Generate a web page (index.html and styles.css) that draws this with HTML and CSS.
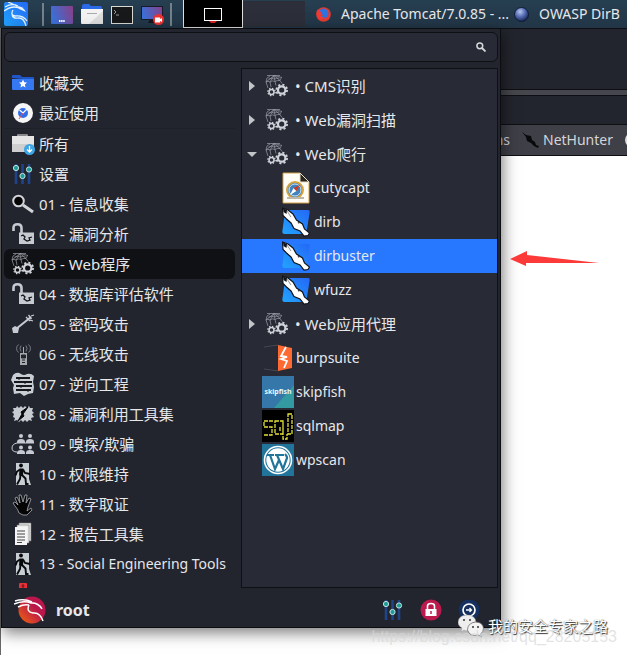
FILE: index.html
```html
<!DOCTYPE html>
<html lang="zh-CN">
<head>
    <meta charset="UTF-8">
    <meta name="viewport" content="width=device-width, initial-scale=1.0">
    <title>Kali</title>
    <link rel="stylesheet" href="styles.css">
</head>
<body>

    <!-- shared icons -->
    <svg class="sprite" aria-hidden="true">
        <defs>
            <linearGradient id="blue" x1="1" y1="0" x2="0" y2="1">
                <stop offset="0" stop-color="#2468f5"/><stop offset="1" stop-color="#22a4ff"/>
            </linearGradient>
            <linearGradient id="wall" x1="0" y1="0.3" x2="1" y2="0">
                <stop offset="0" stop-color="#3d6fd6"/><stop offset="1" stop-color="#8a3f86"/>
            </linearGradient>
            <linearGradient id="fire" x1="1" y1="0" x2="0" y2="1">
                <stop offset="0.4" stop-color="#b9174c"/><stop offset="1" stop-color="#f4680b"/>
            </linearGradient>
            <radialGradient id="orb" cx="0.4" cy="0.3" r="0.7">
                <stop offset="0" stop-color="#b9c6ee"/><stop offset="0.5" stop-color="#566fb8"/><stop offset="1" stop-color="#16254f"/>
            </radialGradient>
        </defs>
        <symbol id="i-web" viewBox="0 0 24 24">
            <g fill="none" stroke="#9a9ea6" stroke-width="0.7">
                <path d="M2 1.500h13M9 1.500L1 8M9 1.500L5 8M9 1.500l1 6M9 1.500l6 5M9 1.500l8 2M1 8q0-5 4-6M1 8q2-1.500 4 0 2-2 5-.5 2-1.500 5-1 0-2 2-3M3.500 5q3-1 6 0 2-1 5-1M1 8l2 6M5 8l1 5M10 7.500l1 4M15 6.500l2 3"/>
            </g>
            <g fill="none" stroke="#d0d4da">
                <circle cx="6.500" cy="18" r="2.500" stroke-width="1.500"/>
                <circle cx="6.500" cy="18" r="3.700" stroke-width="1.200" stroke-dasharray="1.450 1.456"/>
                <circle cx="16.700" cy="16" r="3.700" stroke-width="2.200"/>
                <circle cx="16.700" cy="16" r="5.400" stroke-width="1.800" stroke-dasharray="2.100 2.140"/>
            </g>
        </symbol>
        <symbol id="i-lock" viewBox="0 0 24 24">
            <path d="M2.500 9V6q0-3.800 4-3.800T10.500 6v5" fill="none" stroke="#c6cbd2" stroke-width="2.600"/>
            <path d="M8 10.500h15V22H8z" fill="#c6cbd2"/>
            <path d="M10 14l2-1 2 2-1 2 3 2 3-1-1-2 3-1" fill="none" stroke="#15161a" stroke-width="1.300"/>
        </symbol>
        <symbol id="i-run" viewBox="0 0 24 24">
            <path d="M5 1h13v16l2 6H5z" fill="#c6cdd3"/>
            <circle cx="10" cy="3.500" r="1.900" fill="#08090b"/>
            <path d="M8.500 6.500h4l-.5 7h-4z" fill="#08090b"/>
            <path d="M9 7.500l-3 2-1.500 4M12 7.500l2 3.500 5 1M9.500 13l-.5 4-3 5.500M10.500 12.500l4 4 .5 5.500h2.500" fill="none" stroke="#08090b" stroke-width="1.900"/>
        </symbol>
        <symbol id="i-sliders" viewBox="0 0 24 24">
            <path d="M5 2v20M11.500 2v20M18 2v20" stroke="#1f4489" stroke-width="2.600"/>
            <g fill="#1c9c9a" stroke="#c5e3e1"><circle cx="5" cy="6" r="2.600"/><circle cx="11.500" cy="14" r="2.600"/><circle cx="18" cy="7.500" r="2.600"/></g>
        </symbol>
        <symbol id="i-dragon" viewBox="0 0 28 32">
            <path d="M6 4h20q2 0 1.700 2l-3 19q-.5 3-3.500 3H2.500Q0 28 .4 25L3 6q.4-2 3-2z" fill="url(#blue)"/>
            <path d="M.5 2l5.500 2 5 4 3.500 6 6 4 2 5 5 4-1.500 2.500-4 .5-4-5-6-2.500-3-5.500-4.500-4L1 9.500z" fill="#fff" stroke="#101318" stroke-width="1.200"/>
            <path d="M1 2.500L5 4l-.5 4-3-2zM15.500 16l2 .5-.5 1.500z" fill="#101318"/>
            <path d="M5 5l4 6" stroke="#777" stroke-width=".8"/>
        </symbol>
    </svg>

    <header class="panel">
        <button class="panel-btn" aria-label="Kali">
            <svg width="24" height="24" viewBox="0 0 24 24"><rect width="24" height="24" rx="2" fill="url(#blue)"/><path d="M1 5q7-4 13-1M0 9q8-6 15-3M4 0l9 4M9 8q-3 5 2 6 8-1 12 5M8 13q1 4 7 3 5 0 7 8" fill="none" stroke="#e8f4ff" stroke-width="1.300"/><path d="M13 4q6 0 9 6l-7-3z" fill="#e8f4ff"/></svg>
        </button>
        <span class="divider"></span>
        <button class="panel-btn launcher" aria-label="Desktop">
            <svg width="22" height="22" viewBox="0 0 22 22"><rect y="3" width="22" height="18" rx="1" fill="url(#wall)"/><path d="M8 18h6" stroke="#fff" stroke-width="2" stroke-dasharray="1.500 .6"/></svg>
        </button>
        <button class="panel-btn launcher" aria-label="Files">
            <svg width="22" height="22" viewBox="0 0 22 22"><path d="M1 8V3q0-2 2-2h5l2 2h9q2 0 2 2v3z" fill="#2a6ae6"/><path d="M0 6h22v14q0 1-1 1H1q-1 0-1-1z" fill="#f2f2f2"/><path d="M22 8v12q0 1-1 1H8z" fill="#dcdcdc"/><path d="M6 10.500h10" stroke="#aaa"/></svg>
        </button>
        <button class="panel-btn launcher" aria-label="Terminal">
            <svg width="22" height="22" viewBox="0 0 22 22"><rect x=".5" y="3.500" width="21" height="17" fill="#17191a" stroke="#d8d8d4"/><path d="M3 7l2 2-2 2M5 12h3" fill="none" stroke="#999"/></svg>
        </button>
        <button class="panel-btn launcher" aria-label="Recorder">
            <svg width="24" height="22" viewBox="0 0 24 22"><path d="M7 20l2-4h5v4z" fill="#15171d"/><rect x=".5" y="3.500" width="21" height="13" fill="url(#wall)" stroke="#171a27"/><circle cx="17.500" cy="16.500" r="5.500" fill="#ea3434"/><path d="M14 14.500h5V16l2-1v4l-2-1v1.500h-5z" fill="#fff"/></svg>
        </button>
        <span class="divider"></span>
        <button class="workspace" aria-label="Workspace 1">
            <svg width="18" height="20" viewBox="0 0 18 20"><path d="M5 17h8l-2 2H7z" fill="#d22"/><rect x=".5" y="4.500" width="17" height="12" fill="#000" stroke="#fff"/></svg>
        </button>
        <nav class="tasks">
            <button class="task">
                <svg width="15" height="15" viewBox="0 0 15 15"><circle cx="7.500" cy="7.500" r="7.300" fill="#e23b2e"/><path d="M4 3q3-3 7 0 3 4 0 7-4 3-6 0l2-2-3-2z" fill="#2e73e0"/><path d="M1 3l3 1 2 3-2 1q2 3 5 2-3 4-7 1-2-3-1-8z" fill="#ef3b35"/></svg>
                Apache Tomcat/7.0.85 - ...
            </button>
            <button class="task">
                <svg width="15" height="15" viewBox="0 0 15 15"><circle cx="7.500" cy="7.500" r="7" fill="url(#orb)" stroke="#101a38"/></svg>
                OWASP DirB
            </button>
        </nav>
    </header>

    <main class="desktop">
        <section class="browser">
            <div class="titlebar"></div>
            <div class="tabstrip"></div>
            <div class="urlbar"></div>
            <div class="bookmarks">
                <a href="#">ms</a>
                <a href="#">
                    <svg width="17" height="16" viewBox="0 0 17 16"><path d="M0 0l4 3 5 1 1 4 3 2 1 3 3 1-1 2-4-2-3-3-4-2-1-4z" fill="#08090a"/></svg>
                    NetHunter
                </a>
                <a href="#" aria-label="Bookmark"><svg width="14" height="14" viewBox="0 0 14 14"><circle cx="7" cy="7" r="6" fill="none" stroke="#ddd" stroke-width="2"/></svg></a>
            </div>
            <div class="page"></div>
        </section>

        <section class="menu">
            <div class="search">
                <input type="search" aria-label="搜索">
                <svg width="10" height="10" viewBox="0 0 10 10"><circle cx="3.800" cy="3.800" r="2.900" fill="none" stroke="#d6d7da" stroke-width="1.500"/><path d="M6 6l3.500 3.500" stroke="#d6d7da" stroke-width="1.800"/></svg>
            </div>

            <div class="lists">
                <nav class="categories">
                    <button class="category">
                        <svg viewBox="0 0 24 24"><path d="M1 7V5q0-1 1-1h7l2 2h11q1 0 1 1v2z" fill="#1f57c8"/><path d="M1 8h22v11H2q-1 0-1-1z" fill="#3677f2"/><path d="M12 8.500l1.200 2.700 2.800.3-2.100 2 .6 2.900-2.500-1.500-2.500 1.500.6-2.900-2.100-2 2.800-.3z" fill="#fff"/></svg>
                        收藏夹
                    </button>
                    <button class="category">
                        <svg viewBox="0 0 24 24"><circle cx="12" cy="12" r="10" fill="#f6f6f6"/><circle cx="12" cy="12" r="5" fill="#2f6ee8"/><path d="M8.500 9l3.500 3 4-4" fill="none" stroke="#fff" stroke-width="1.200"/><path d="M12 12l-4 6" stroke="#e05060"/></svg>
                        最近使用
                    </button>
                    <hr>
                    <button class="category">
                        <svg viewBox="0 0 24 24"><path d="M7 5V3h9v2" fill="none" stroke="#aaa" stroke-width="1.500"/><path d="M1 4h22v15H1z" fill="#e5e5e5"/><path d="M1 12h22v8H1z" fill="#cfcfcf"/><circle cx="18.500" cy="17.500" r="5.500" fill="#3ea5e6"/><path d="M18.500 14v5M16 17.500l2.500 2.500 2.500-2.500" fill="none" stroke="#fff" stroke-width="1.300"/></svg>
                        所有
                    </button>
                    <button class="category"><svg><use href="#i-sliders"/></svg>设置</button>
                    <button class="category">
                        <svg viewBox="0 0 24 24"><circle cx="7.500" cy="9" r="5.300" fill="#050505" stroke="#d0d3d8" stroke-width="2"/><path d="M12 13l10 7" stroke="#d0d3d8" stroke-width="3"/></svg>
                        01 - 信息收集
                    </button>
                    <button class="category"><svg><use href="#i-lock"/></svg>02 - 漏洞分析</button>
                    <button class="category active"><svg><use href="#i-web"/></svg>03 - Web程序</button>
                    <button class="category"><svg><use href="#i-lock"/></svg>04 - 数据库评估软件</button>
                    <button class="category">
                        <svg viewBox="0 0 24 24"><path d="M5 17L20 5" stroke="#c6cbd2" stroke-width="2"/><path d="M15 5l4 4M17.500 3l3 4M19 8l3 1M20 4l3-1" stroke="#c6cbd2" stroke-width="1.300"/><path d="M1 16l3-2 4 2-1 5-5 0z" fill="#c6cbd2"/></svg>
                        05 - 密码攻击
                    </button>
                    <button class="category">
                        <svg viewBox="0 0 24 24"><path d="M9 11h7v12H9zM12 5h1v6H12z" fill="#a5a8ad"/><path d="M10.500 13h4v3h-4zM11 18h3M11 20.500h3" fill="#23252e" stroke="#23252e"/><path d="M10 3.500q-2 3 0 6M7.500 2.500q-4 4 0 8M15 3.500q2 3 0 6M17.500 2.500q4 4 0 8" fill="none" stroke="#8b8e93" stroke-width=".8"/></svg>
                        06 - 无线攻击
                    </button>
                    <button class="category">
                        <svg viewBox="0 0 24 24"><path d="M2 3q4-4 8-1 3 2 6 0 4-1 7 2l-1 6 1 5-1 6-5 1-4 2-4-3-6 1-1-6 1-3-3-5z" fill="#c9ced5"/><path d="M5 6h14M3 10h18M5 14h16M5 18h15" stroke="#17191e" stroke-width="1.800"/><path d="M8 5v3M14 9v3M10 13v3M17 17v3" stroke="#17191e"/></svg>
                        07 - 逆向工程
                    </button>
                    <button class="category">
                        <svg viewBox="0 0 24 24"><path d="M2 6l3 0 1-2 2 2 2-2 2 2 2-2 2 2 2-2 1 2h3l-1 3 2 2-2 1 2 3-3 1 1 3-3-1-2 2-2-2-2 2-2-2-2 2-2-2-3 1 1-3-2-1 1-3-2-2 2-1z" fill="#c6cbd2"/><path d="M17 5l-7 5 1 2-4 7 6-5-1-2z" fill="#050608" stroke="#050608"/></svg>
                        08 - 漏洞利用工具集
                    </button>
                    <button class="category">
                        <svg viewBox="0 0 24 24"><g fill="#c6cbd2"><circle cx="10" cy="4" r="2"/><circle cx="19" cy="4" r="2"/><path d="M6 10q0-3 4-3t4 3v1H6zM15 10q0-3 4-3t4 3v1h-8zM6 21q0-3 4-3t4 3v1H6zM15 21q0-3 4-3t4 3v1h-8z"/><circle cx="10" cy="15.500" r="2"/><circle cx="19" cy="15.500" r="2"/></g><path d="M23 11H6q-5 1-5 5 0 4 5 4" fill="none" stroke="#c6cbd2"/></svg>
                        09 - 嗅探/欺骗
                    </button>
                    <button class="category"><svg><use href="#i-run"/></svg>10 - 权限维持</button>
                    <button class="category">
                        <svg viewBox="0 0 24 24"><path d="M8 21q-1-4-4-7l-2-3 2-1 3 3-3-7 2-1 3 6-1-8h2l2 7 2-7h2l-1 8 3-5 2 1-3 8-1 4 4-3 1 2-5 5-4 0z" fill="#050506" stroke="#a9acb1" stroke-width=".8"/></svg>
                        11 - 数字取证
                    </button>
                    <button class="category">
                        <svg viewBox="0 0 24 24"><path d="M8 1h12v18H8z" fill="#e9e9e9" stroke="#777" stroke-width=".6"/><path d="M6 3h12v18H6z" fill="#eee" stroke="#777" stroke-width=".6"/><path d="M4 5h12v18H4z" fill="#f5f5f5"/><path d="M6 9h8M6 12h8M6 15h8M6 18h8M6 20.500h5" stroke="#444"/></svg>
                        12 - 报告工具集
                    </button>
                    <button class="category latin"><svg><use href="#i-run"/></svg>13 - Social Engineering Tools</button>
                    <button class="category" aria-label="14">
                        <svg viewBox="0 0 24 24"><rect x="8" y="1" width="8" height="20" rx="1" fill="#e8303a"/><path d="M12 2v4M10.500 4h3" stroke="#701018"/></svg>
                    </button>
                </nav>

                <ul class="tree">
                    <li><button class="group"><i class="arrow"></i><svg><use href="#i-web"/></svg>• CMS识别</button></li>
                    <li><button class="group"><i class="arrow"></i><svg><use href="#i-web"/></svg>• Web漏洞扫描</button></li>
                    <li>
                        <button class="group open"><i class="arrow"></i><svg><use href="#i-web"/></svg>• Web爬行</button>
                        <ul>
                            <li><button class="app latin">
                                <svg viewBox="0 0 28 32"><path d="M1 1h17l9 9v21H1z" fill="#fffdf6" stroke="#d5a14c"/><path d="M18 1v9h9z" fill="#2b2620" stroke="#e9dfc4"/><circle cx="13" cy="18" r="8" fill="#3f82bd" stroke="#d7a33d" stroke-width="2"/><circle cx="13" cy="18" r="6" fill="none" stroke="#d3e6f3"/><path d="M8 23l3.500-7 3 3z" fill="#fff"/><path d="M18 13l-6.500 3 3 3z" fill="#d23a20"/><path d="M5 26h17" stroke="#bdb7a8" stroke-width="2"/></svg>
                                cutycapt
                            </button></li>
                            <li><button class="app latin"><svg><use href="#i-dragon"/></svg>dirb</button></li>
                            <li><button class="app latin selected"><svg><use href="#i-dragon"/></svg>dirbuster</button></li>
                            <li><button class="app latin"><svg><use href="#i-dragon"/></svg>wfuzz</button></li>
                        </ul>
                    </li>
                    <li><button class="group"><i class="arrow"></i><svg><use href="#i-web"/></svg>• Web应用代理</button></li>
                    <li><button class="tool latin">
                        <svg viewBox="0 0 32 32"><path d="M2 5l14-2M2 27l14 2" stroke="#444752"/><path d="M16 3l14 3v20l-14 3z" fill="#ff6a33"/><path d="M24 5l-5 9 6 1-6 2 6 2-3 7" fill="none" stroke="#fff" stroke-width="1.800"/></svg>
                        burpsuite
                    </button></li>
                    <li><button class="tool latin">
                        <svg viewBox="0 0 32 32"><path d="M0 0h32v32H0z" fill="#3477a8"/><path d="M32 9v23H12z" fill="#329aa0"/><text x="16" y="18" class="skip">skipfish</text></svg>
                        skipfish
                    </button></li>
                    <li><button class="tool latin">
                        <svg viewBox="0 0 32 32"><path d="M0 0h32v32H0z" fill="#000"/><path d="M11 11H2v6h8v8H2M13 11h8v13h-8zM18 17v4M21 11v18h4v-5M26 4h4v20h-4z" fill="none" stroke="#e3e13a" stroke-width="1.300" stroke-dasharray="4 1"/></svg>
                        sqlmap
                    </button></li>
                    <li><button class="tool latin">
                        <svg viewBox="0 0 32 32"><path d="M0 0h32v32H0z" fill="#21759b"/><circle cx="16" cy="16" r="13.500" fill="none" stroke="#fff" stroke-width="1.600"/><circle cx="16" cy="16" r="11.700" fill="#fff"/><path d="M5 11h7M13 11h9M8 11l5 14 4-9M15 11l6 14 4-11q0-2-2-4" fill="none" stroke="#21759b" stroke-width="2.200"/></svg>
                        wpscan
                    </button></li>
                </ul>
            </div>

            <footer class="user">
                <svg width="32" height="30" viewBox="0 0 32 30"><circle cx="18" cy="15" r="13.500" fill="url(#fire)"/><path d="M0 9q10-4 17-1M1 6q9-3 17 1M4 12q6-3 11-2M15 10q-3 7 4 8 7-1 10 8M16 8q8-1 12 6" fill="none" stroke="#fff" stroke-width="1.500"/></svg>
                <span class="name">root</span>
                <button aria-label="设置"><svg width="24" height="24"><use href="#i-sliders"/></svg></button>
                <button aria-label="锁定"><svg width="24" height="24" viewBox="0 0 24 24"><circle cx="12" cy="12" r="10.500" fill="#bb1a4d"/><path d="M8.500 11V8q0-2.500 3.500-2.500T15.500 8v3" fill="none" stroke="#fff" stroke-width="1.600"/><path d="M6.500 11h11v7h-11z" fill="#fff"/><path d="M12 13v3" stroke="#bb1a4d" stroke-width="1.500"/></svg></button>
                <button aria-label="注销"><svg width="24" height="24" viewBox="0 0 24 24"><circle cx="12" cy="12" r="10.500" fill="#15305f"/><circle cx="12" cy="12" r="6" fill="none" stroke="#fff" stroke-width="1.700"/><path d="M9 12h5M12.500 10l2 2-2 2" fill="none" stroke="#fff" stroke-width="1.300"/></svg></button>
            </footer>
        </section>

        <svg class="pointer" width="90" height="18" viewBox="0 0 90 18"><path d="M0 9L17 1v4l72 8-73 0v3z" fill="#fb3a39"/></svg>

        <div class="watermark">
            <div class="brand">
                <svg width="26" height="24" viewBox="0 0 26 24"><path d="M9 1q8 0 9 7-8 1-8 9-3 0-4-1l-3 2 1-4Q0 12 0 8q1-7 9-7z" fill="#eee" stroke="#999" stroke-width=".5"/><path d="M17.500 8q7 0 8 6 0 4-3 6l1 3-3-2q-9 2-11-5 0-7 8-8z" fill="#f3f3f3" stroke="#666" stroke-width=".7"/><g fill="#333"><circle cx="6" cy="6" r="1"/><circle cx="12" cy="6" r="1"/><circle cx="15" cy="13" r="1"/><circle cx="20" cy="13" r="1"/></g></svg>
                我的安全专家之路
            </div>
            <p class="link">https://blog.csdn.net/qq_28205153</p>
        </div>
    </main>

</body>
</html>
```

FILE: styles.css
```css
* {
    box-sizing: border-box;
}

body {
    margin: 0;
    height: 100vh;
    display: flex;
    flex-direction: column;
    overflow: hidden;
    font-family: "Noto Sans", "Noto Sans CJK SC", sans-serif;
    font-size: 15px;
    line-height: 20px;
    color: #e6e7ea;
    background-color: #fff;
}

button {
    padding: 0;
    border: none;
    background: none;
    font: inherit;
    color: inherit;
    text-align: left;
    white-space: nowrap;
}

svg {
    flex: none;
    display: block;
}

.sprite {
    position: absolute;
    width: 0;
    height: 0;
}

/* top panel */
.panel {
    display: flex;
    align-items: center;
    height: 28px;
    padding-left: 4px;
    background-image: linear-gradient(#263f51, #213546);
    overflow: hidden;
}

.launcher {
    margin-right: 8px;
}

.divider {
    flex: none;
    width: 2px;
    height: 23px;
    margin: 0 7px 0 14px;
    background-color: #75818a;
}

.launcher + .divider {
    margin: 0 11px 0 -3px;
}

.workspace {
    flex: none;
    display: flex;
    align-items: center;
    justify-content: center;
    width: 60px;
    height: 28px;
    background-color: #000;
    border: 1px solid #e0e0e0;
    border-top: none;
}

.tasks {
    flex: 1;
    display: flex;
    gap: 5px;
    min-width: 0;
    border-left: 62px solid #2c2e39;
    padding-left: 11px;
    overflow: hidden;
}

.task {
    display: flex;
    align-items: center;
    gap: 10px;
    height: 26px;
    font-size: 14px;
}

/* browser window under the menu */
.desktop {
    flex: 1;
    display: flex;
    position: relative;
    min-height: 0;
}

.browser {
    flex: 1;
    display: flex;
    flex-direction: column;
    border-left: 1px solid #686868;
}

.titlebar {
    height: 62px;
    background-color: #23252e;
    border-top: 1px solid #0e0f13;
    border-bottom: 1px solid #0e0f13;
}

.tabstrip {
    height: 6px;
    background-color: #46474e;
    border-bottom: 1px solid #0e0f13;
}

.urlbar {
    height: 29px;
    background-color: #23252e;
    border-bottom: 1px solid #0e0f13;
}

.bookmarks {
    display: flex;
    align-items: center;
    justify-content: flex-end;
    gap: 12px;
    height: 31px;
    margin-right: -12px;
    background-color: #3e3f47;
    border-bottom: 1px solid #0e0f13;
}

.bookmarks a {
    display: flex;
    align-items: center;
    gap: 4px;
    font-size: 14px;
    color: #d4d5d8;
    text-decoration: none;
}

.page {
    flex: 1;
    background-color: #fff;
}

/* whisker menu */
.menu {
    position: absolute;
    top: 0;
    right: 126px;
    bottom: 27px;
    left: 1px;
    display: flex;
    flex-direction: column;
    padding: 3px 2px 0;
    background-color: #23252e;
    border: 1px solid #0c0d11;
    box-shadow: 2px 5px 14px rgba(0, 0, 0, 0.5);
}

.search {
    display: flex;
    align-items: center;
    height: 30px;
    padding-right: 11px;
    background-color: #282a35;
    border: 1px solid #0f1014;
    border-radius: 6px;
}

.search input {
    flex: 1;
    border: none;
    outline: none;
    background: none;
    color: inherit;
    font: inherit;
}

.lists {
    flex: 1;
    display: grid;
    grid-template-columns: minmax(0, 231fr) minmax(0, 257fr);
    gap: 6px;
    min-height: 0;
    margin-top: 6px;
}

.categories {
    display: flex;
    flex-direction: column;
    overflow: hidden;
}

.categories hr {
    flex: none;
    width: 100%;
    height: 1px;
    margin: 0;
    border: none;
    background-color: #1e2027;
}

.category {
    flex: none;
    display: flex;
    align-items: center;
    gap: 4px;
    height: 30px;
    padding-left: 7px;
    border-radius: 6px;
}

.category svg,
.group svg {
    width: 24px;
    height: 24px;
}

.category.active {
    background-color: #101114;
}

.tree {
    margin: 0;
    padding: 0;
    list-style: none;
    background-color: #282a35;
    border: 1px solid #0f1014;
    overflow: hidden;
}

.tree ul {
    margin: 0;
    padding: 0;
    list-style: none;
}

.group,
.app,
.tool {
    display: flex;
    align-items: center;
    width: 100%;
    height: 34px;
}

.group {
    gap: 8px;
    padding-left: 5px;
}

.group svg {
    margin-right: -2px;
}

.arrow {
    width: 10px;
    height: 10px;
    background-color: #c3c4c7;
    clip-path: polygon(20% 0, 80% 50%, 20% 100%);
}

.open .arrow {
    clip-path: polygon(0 30%, 100% 30%, 50% 80%);
}

.app {
    gap: 4px;
    padding-left: 40px;
}

.app svg {
    width: 28px;
    height: 32px;
}

.app.selected {
    background-color: #2777ff;
}

.tool {
    gap: 2px;
    padding-left: 20px;
}

.tool svg {
    width: 32px;
    height: 32px;
}

.latin {
    font-size: 14px;
}

.skip {
    font-size: 7px;
    font-weight: bold;
    fill: #e8f6f8;
    text-anchor: middle;
}

.user {
    display: flex;
    align-items: center;
    gap: 14px;
    height: 39px;
    padding: 4px 17px 0 10px;
}

.user .name {
    flex: 1;
    font-size: 16px;
    font-weight: bold;
    margin-left: -4px;
}

/* overlays */
.pointer {
    position: absolute;
    top: 222px;
    right: 27px;
}

.watermark {
    position: absolute;
    right: 10px;
    bottom: 8px;
    display: flex;
    flex-direction: column;
    align-items: flex-end;
}

.brand {
    display: flex;
    align-items: center;
    gap: 4px;
    padding-right: 9px;
    color: #fff;
    text-shadow: 1px 1px 1px #333, 0 0 1px #555;
}

.link {
    margin: -11px 0 0;
    font-family: "Liberation Sans", sans-serif;
    font-size: 16px;
    color: rgba(215, 215, 215, 0.7);
}
```
